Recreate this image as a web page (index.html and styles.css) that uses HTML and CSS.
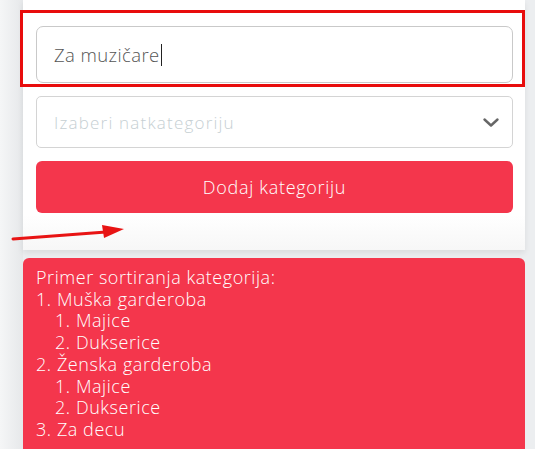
FILE: index.html
```html
<!DOCTYPE html>
<html>
<head>
<meta charset="utf-8">
<link rel="stylesheet" href="styles.css">
</head>
<body>
<div class="page">
  <div class="card">
    <div class="input">Za muzičare<span class="caret"></span></div>
    <div class="select">
      <span class="placeholder">Izaberi natkategoriju</span>
      <svg class="chev" width="18" height="12" viewBox="0 0 18 12"><path d="M2.5 2.5 L9 8.5 L15.5 2.5" fill="none" stroke="#666" stroke-width="2.4" stroke-linecap="round" stroke-linejoin="round"/></svg>
    </div>
    <div class="btn">Dodaj kategoriju</div>
  </div>
  <div class="info">
    <div>Primer sortiranja kategorija:</div>
    <div>1. Muška garderoba</div>
    <div class="sub">1. Majice</div>
    <div class="sub">2. Dukserice</div>
    <div>2. Ženska garderoba</div>
    <div class="sub">1. Majice</div>
    <div class="sub">2. Dukserice</div>
    <div>3. Za decu</div>
  </div>
  <div class="highlight"></div>
  <svg class="arrow" width="130" height="20" viewBox="0 0 130 20"><path d="M13 15 L106 8" stroke="#e81414" stroke-width="3" stroke-linecap="round"/><path d="M102 1 L124 5 L104 14 Z" fill="#e81414"/></svg>
</div>
</body>
</html>
```
FILE: styles.css
```css
html, body { margin: 0; padding: 0; }
body {
  background: #eceef0;
  font-family: "Open Sans", "Noto Sans", sans-serif;
  font-weight: 300;
  width: 535px;
  height: 449px;
  overflow: hidden;
}
.page {
  position: relative;
  padding: 0 10px 0 23px;
  background: linear-gradient(to right, #f5f6f7 0, #e6e8ea 23px, #eceef0 23px);
  height: 449px;
}
.card {
  padding: 26px 12px 37px 13px;
  display: flex;
  flex-direction: column;
  gap: 13px;
  box-shadow: 0 3px 6px rgba(0,0,0,0.08);
  background: linear-gradient(to bottom, #fff 0, #fff 215px, #f7f7f7 250px);
}
.input {
  height: 55px;
  border: 1px solid #c9c9c9;
  border-radius: 7px;
  display: flex;
  align-items: center;
  padding-left: 17px;
  font-size: 18.5px;
  color: #555;
  letter-spacing: 0.4px;
}
.caret {
  display: inline-block;
  width: 1px;
  height: 22px;
  background: #222;
  margin-left: 1px;
}
.select {
  height: 50px;
  border: 1px solid #d4d4d4;
  border-radius: 5px;
  display: flex;
  align-items: center;
  justify-content: space-between;
  padding: 0 12px 0 17px;
}
.placeholder {
  font-size: 17px;
  color: #c6cfd3;
  letter-spacing: 1.2px;
}
.chev { display: block; margin-top: 2px; }
.btn {
  height: 52px;
  background: #f4364c;
  border-radius: 6px;
  color: #fff;
  font-size: 18px;
  letter-spacing: 0.7px;
  display: flex;
  align-items: center;
  justify-content: center;
}
.info {
  margin-top: 8px;
  background: #f4364c;
  border-radius: 6px 6px 0 0;
  color: #fff;
  font-size: 18px;
  line-height: 21.7px;
  letter-spacing: 0.55px;
  padding: 9px 13px 20px;
}
.info .sub { padding-left: 19px; }
.highlight {
  position: absolute;
  left: 20px;
  top: 10px;
  width: 499px;
  height: 71px;
  border: 3px solid #e80c0c;
}
.arrow {
  position: absolute;
  left: 0;
  top: 224px;
}
```
